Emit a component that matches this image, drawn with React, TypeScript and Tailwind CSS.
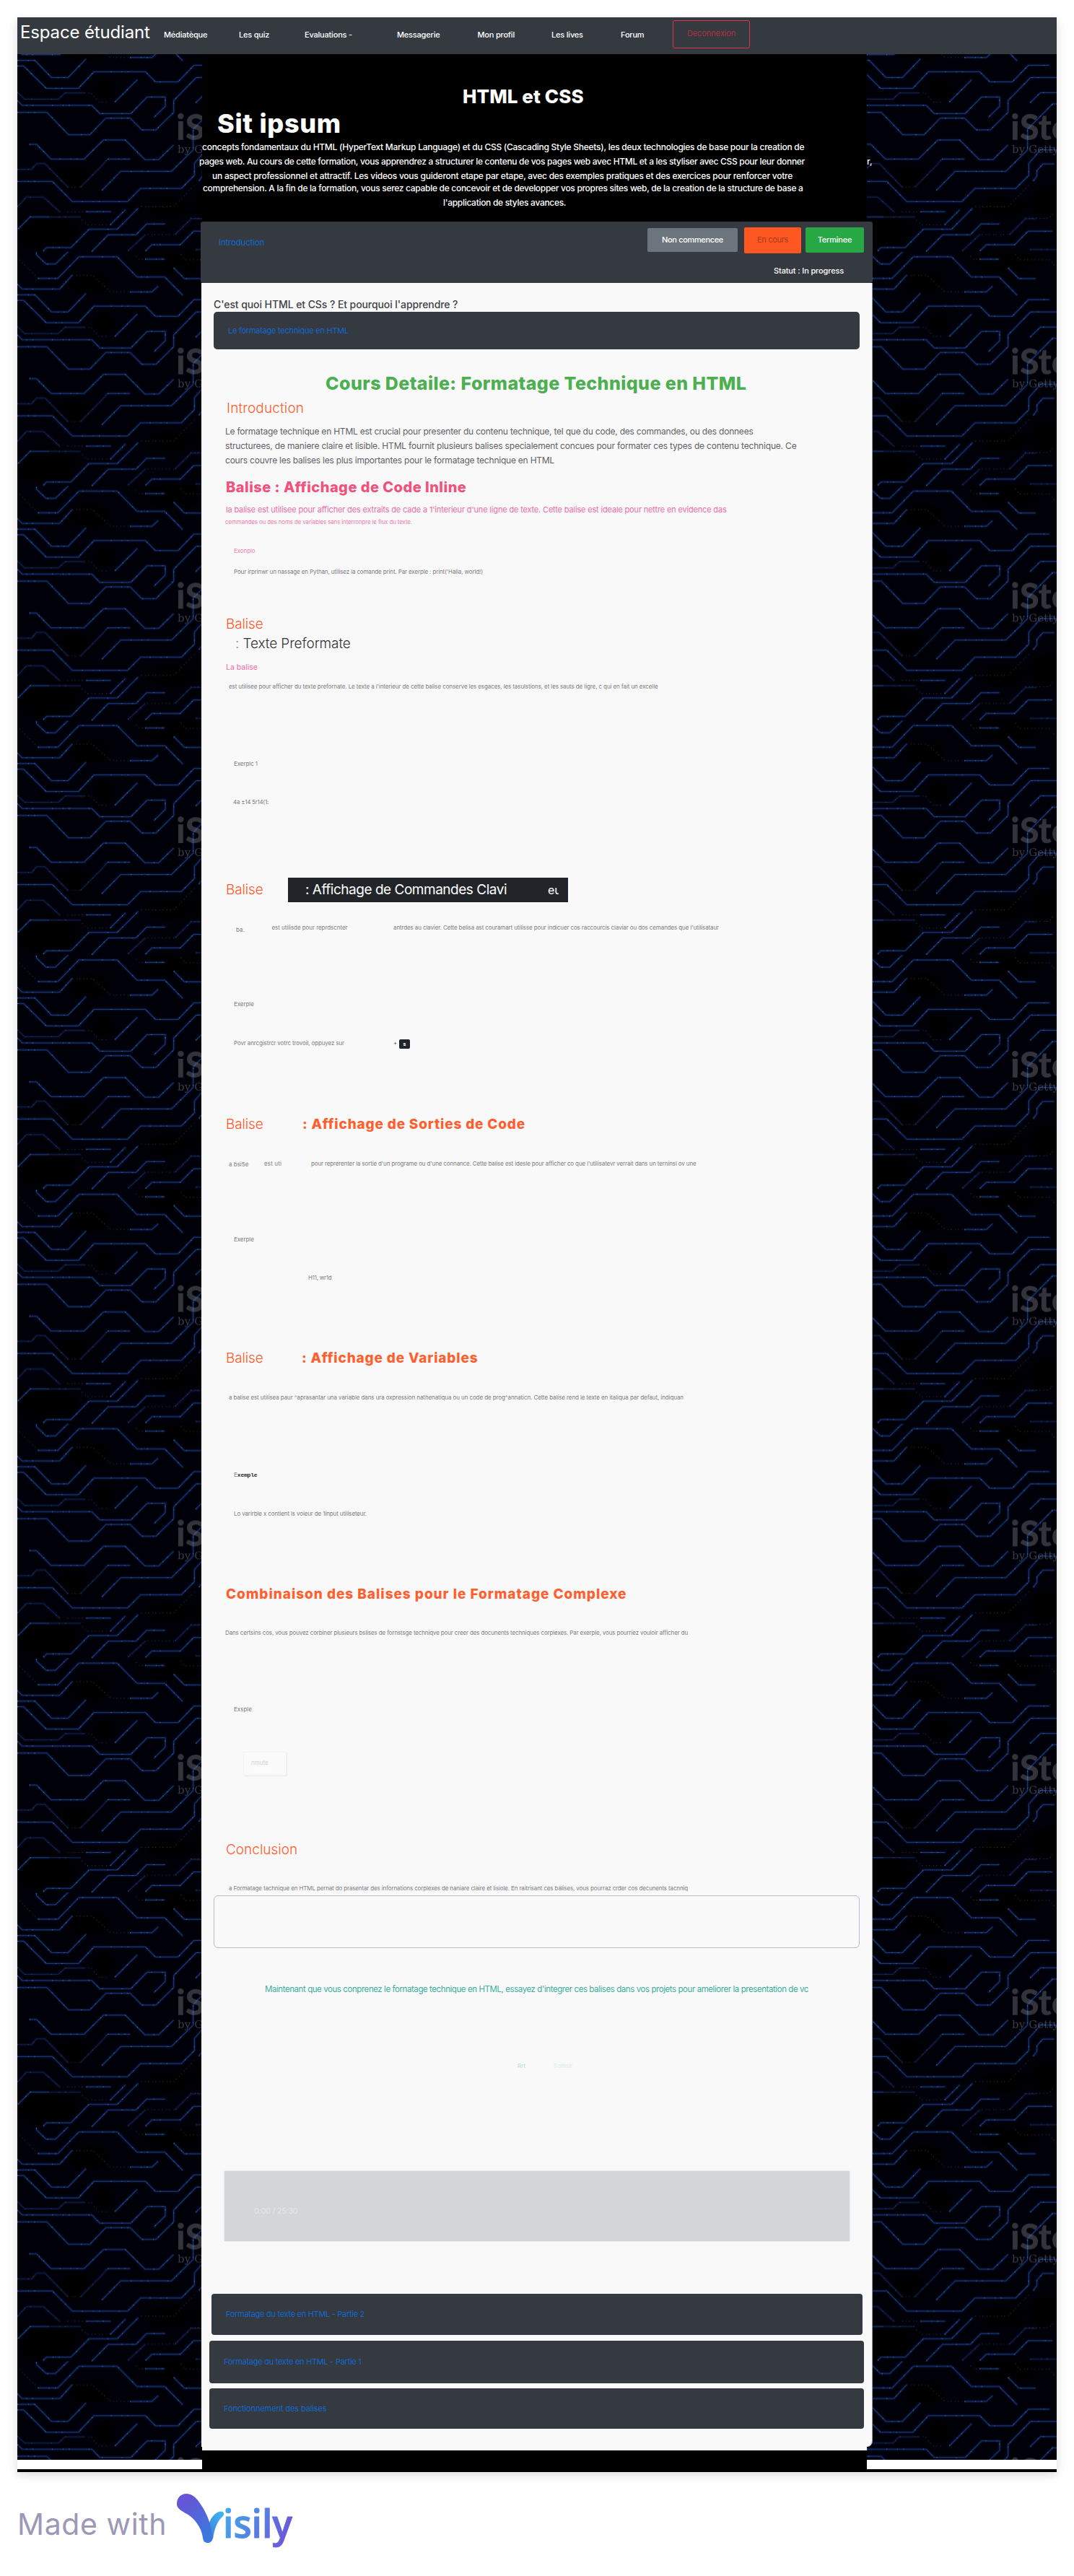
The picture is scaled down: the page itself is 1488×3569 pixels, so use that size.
import React from "react";

const SMALL = "text-[8px] leading-[20px] whitespace-nowrap text-[#7b7e81]";
const HEADING = "font-extrabold leading-[20px] whitespace-nowrap";
const ORANGE = "text-[19px] font-light leading-[20px] tracking-[-0.15px] whitespace-nowrap text-[#ff5a28]";
const LINK = "text-[11px] leading-[20px] whitespace-nowrap text-[#1268d0]";
const HERO = "text-[12px] font-medium leading-[20px] whitespace-nowrap";

const traces = [
  "72,71 145,71 214,142 283,142 358,65",
  "72,94 98,94 192,187 326,187 391,118 604,118 646,160 740,160 807,91 894,91",
  "72,238 93,258 382,258 415,292 544,292 612,223 687,223 687,262 640,308",
  "478,244 571,151",
  "72,287 195,287 285,380 373,380 440,311 541,311 590,360 648,360 722,287 722,238 816,142 940,142",
  "814,247 857,205 940,205",
  "122,420 152,420 212,481 350,481 430,402 521,402 602,483 660,483 722,422",
  "447,481 541,481",
  "424,611 502,532 713,532 803,443 803,357 907,252 940,252",
  "72,574 218,574 301,658 530,658 585,603 754,603 808,549 808,499 857,443 940,443",
  "827,572 842,552 842,529 867,501 914,501",
  "358,700 461,700",
  "458,755 522,691",
  "75,772 125,722 200,722",
  "180,863 194,849 295,849 370,773 487,773 575,685",
  "382,865 450,796 565,796 609,751 685,751",
  "605,863 632,837 750,837 805,781 907,781",
];

const faintTraces = [
  "72,203 102,232 243,232 270,206 350,206",
  "72,524 131,524 152,500 187,500 282,598",
  "335,598 424,508 447,481",
  "72,680 110,639 180,639 250,702",
  "200,722 335,722",
  "532,862 605,795",
  "728,795 795,729 840,729",
  "814,857 940,857",
];

const lowerTraces = [
  "151,870 152,880 192,918 230,918 285,865",
  "158,978 240,978 328,888 487,888 570,972 685,972 760,1048",
  "603,898 685,898",
  "722,934 767,979 837,979",
  "72,1002 92,1022 248,1022 300,965",
  "540,1034 632,1034 658,1010",
];

const dottedTraces = [
  "280,598 335,598",
  "350,206 378,206 410,244 450,244",
  "280,700 345,700",
  "340,735 365,755 450,755",
  "585,679 722,679 808,590",
  "612,795 728,795",
  "792,727 894,727 910,703",
];

const lowerDotted = [
  "80,900 158,978",
  "300,965 385,965 460,1034 540,1034",
  "565,885 578,898 603,898",
  "752,877 770,900 894,900 924,935",
];

function Traces({ items, faint }: { items: string[]; faint?: boolean }) {
  return (
    <g fill="none" strokeLinejoin="round" opacity={faint ? 0.55 : 0.95}>
      {items.map((p) => (
        <g key={p}>
          <polyline points={p} stroke="#03123c" strokeWidth="14" opacity="0.35" />
          <polyline points={p} stroke="#06205c" strokeWidth="7" opacity="0.45" />
          <polyline points={p} stroke="#1f3d78" strokeWidth="3" />
          <polyline points={p} stroke="#4d7cae" strokeWidth="3" strokeDasharray="4 41 3 22 4 78" />
        </g>
      ))}
    </g>
  );
}

function Dotted({ items }: { items: string[] }) {
  return (
    <g fill="none" stroke="#46566f" strokeWidth="3">
      {items.map((p) => (
        <polyline key={p} points={p} strokeDasharray="4 14 3 9" opacity="0.65" />
      ))}
    </g>
  );
}

function CircuitBackdrop() {
  return (
    <svg className="block h-[3333px] w-full" viewBox="0 0 1440 3333" preserveAspectRatio="none">
      <defs>
        <radialGradient id="shade">
          <stop offset="0.4" stopColor="#000" />
          <stop offset="1" stopColor="#000" stopOpacity="0" />
        </radialGradient>
        <pattern id="circuit" x="0" y="-51" width="578" height="324.75" patternUnits="userSpaceOnUse">
          <rect width="578" height="325" fill="#000009" />
          <g transform="translate(-24 36) scale(0.3333)">
            <g fill="url(#shade)">
              <ellipse cx="435" cy="190" rx="60" ry="60" />
              <ellipse cx="310" cy="560" rx="110" ry="70" />
              <ellipse cx="190" cy="780" rx="190" ry="110" />
              <ellipse cx="700" cy="680" rx="130" ry="60" />
              <ellipse cx="720" cy="-80" rx="190" ry="90" />
              <ellipse cx="370" cy="20" rx="120" ry="70" />
              <ellipse cx="890" cy="660" rx="120" ry="90" />
            </g>
            <Traces items={traces} />
            <Traces items={faintTraces} faint />
            <Dotted items={dottedTraces} />
            <g transform="translate(0 -975)">
              <Traces items={lowerTraces} />
              <Dotted items={lowerDotted} />
            </g>
          </g>
          <text x="220" y="170" fontFamily="Lato" fontWeight="900" fontSize="49" fill="#808088" fillOpacity="0.4">
            iStock
          </text>
          <text x="222" y="187.500" fontFamily="DejaVu Serif" fontSize="15" fill="#808088" fillOpacity="0.45" textLength="65">
            by Getty
          </text>
        </pattern>
      </defs>
      <rect width="578" height="3333" fill="url(#circuit)" />
      <rect x="1156" width="284" height="3333" fill="url(#circuit)" />
    </svg>
  );
}

function NavBar() {
  return (
    <nav className="flex h-[51px] bg-[#343a40] pl-1 text-[11px] font-medium text-white">
      <div className="mt-[11px] w-[199px] text-[24px] font-normal leading-[20px] tracking-[-0.15px] whitespace-nowrap">
        Espace étudiant
      </div>
      <div className="flex pt-[14px] leading-[20px] tracking-[-0.2px] whitespace-nowrap">
        <a className="w-[104px]">Médiatèque</a>
        <a className="w-[91px]">Les quiz</a>
        <a className="w-[128px]">Evaluations -</a>
        <a className="w-[111.5px]">Messagerie</a>
        <a className="w-[102.5px]">Mon profil</a>
        <a className="w-[96px]">Les lives</a>
        <a className="w-[72px]">Forum</a>
      </div>
      <button className="mt-1 h-[39px] w-[107px] rounded-[3px] border border-[#dc3545] pb-[3px] text-[11px] font-normal leading-[20px] tracking-[-0.1px] text-[#b52f40]">
        Deconnexion
      </button>
    </nav>
  );
}

function Hero() {
  return (
    <header className="ml-[2px] h-[232px] w-[921px] bg-black pt-[49px] text-white">
      <h1 className={HEADING + " pl-[361px] text-[26px] tracking-[0.07px]"}>HTML et CSS</h1>
      <h2 className={HEADING + " mt-[17px] pl-[21px] text-[36px] tracking-[0.7px]"}>Sit ipsum</h2>
      <p className={HERO + " mt-[13px] tracking-[-0.262px]"}>
        concepts fondamentaux du HTML (HyperText Markup Language) et du CSS (Cascading Style Sheets), les deux technologies de base pour la creation de
      </p>
      <div className="-ml-[4px] flex">
        <p className={HERO + " w-[925px] shrink-0 tracking-[-0.32px]"}>
          pages web. Au cours de cette formation, vous apprendrez a structurer le contenu de vos pages web avec HTML et a les styliser avec CSS pour leur donner
        </p>
        <span className={HERO}>r,</span>
      </div>
      <p className={HERO + " pl-[14px] tracking-[-0.24px]"}>
        un aspect professionnel et attractif. Les videos vous guideront etape par etape, avec des exemples pratiques et des exercices pour renforcer votre
      </p>
      <p className={HERO + " -mt-[3px] pl-px tracking-[-0.303px]"}>
        comprehension. A la fin de la formation, vous serez capable de concevoir et de developper vos propres sites web, de la creation de la structure de base a
      </p>
      <p className={HERO + " pl-[334px] tracking-[-0.3px]"}>l'application de styles avances.</p>
    </header>
  );
}

function StatusBar() {
  return (
    <div className="h-[85px] w-[931px] rounded-[3px] bg-[#343a40]">
      <div className="flex h-[50px] items-start text-[11px] font-medium leading-[20px] text-white">
        <a className="mt-[19px] w-[619px] pl-[25px] text-[11.5px] font-normal tracking-[-0.19px] text-[#1268d0]">Introduction</a>
        <button className="mt-[9px] h-[33px] w-[125px] rounded-[2px] bg-[#6c757d] pb-px tracking-[-0.34px]">Non commencee</button>
        <button className="ml-[9px] mt-[8px] h-[36px] w-[79px] rounded-[2px] bg-[#ff5722] pb-[2px] font-normal tracking-[-0.3px] text-[#a33d1f]">En cours</button>
        <button className="ml-[6px] mt-[8px] h-[35px] w-[81px] rounded-[2px] bg-[#28a745] pb-px tracking-[-0.22px]">Terminee</button>
      </div>
      <div className="mt-[8px] pl-[794px] text-[11px] font-medium leading-[20px] tracking-[-0.13px] whitespace-nowrap text-white">
        Statut : In progress
      </div>
    </div>
  );
}

function Article() {
  return (
    <main className="ml-[1px] h-[2998px] w-[930px] rounded-br-[8px] border-r border-[#9a9da1] bg-[#f9f9f9] pl-px">
      <h3 className="ml-[16px] pt-[20px] text-[14px] font-medium leading-[20px] tracking-[-0.08px] text-[#3f4245]">
        C'est quoi HTML et CSs ? Et pourquoi l'apprendre ?
      </h3>
      <div className="ml-[16px] h-[52px] w-[895px] rounded-[5px] bg-[#343a40] pl-[20px] pt-[16px]">
        <a className={LINK + " block tracking-[-0.243px]"}>Le formatage technique en HTML</a>
      </div>

      <h2 className={HEADING + " ml-[171px] mt-[37px] text-[25px] tracking-[0.42px] text-[#4caf50]"}>
        Cours Detaile: Formatage Technique en HTML
      </h2>
      <h3 className="ml-[34px] mt-[15px] text-[19px] font-light leading-[20px] tracking-[0.15px] text-[#ff5a28]">Introduction</h3>
      <div className="ml-[32px] mt-[12px] text-[12px] leading-[20px] whitespace-nowrap text-[#5f6265]">
        <p className="tracking-[-0.22px]">
          Le formatage technique en HTML est crucial pour presenter du contenu technique, tel que du code, des commandes, ou des donnees
        </p>
        <p className="tracking-[-0.187px]">
          structurees, de maniere claire et lisible. HTML fournit plusieurs balises specialement concues pour formater ces types de contenu technique. Ce
        </p>
        <p className="tracking-[-0.223px]">cours couvre les balises les plus importantes pour le formatage technique en HTML</p>
      </div>

      <h3 className={HEADING + " ml-[33px] mt-[17px] text-[20px] tracking-[0.47px] text-[#f1527c]"}>
        Balise : Affichage de Code Inline
      </h3>
      <p className="ml-[33px] mt-[11px] text-[11px] leading-[20px] tracking-[-0.17px] whitespace-nowrap text-[#ef6ca6]">
        la balise est utilisee pour afficher des extraits de cade a 1'interieur d'une ligne de texte. Cette balise est ideale pour nettre en evidence das
      </p>
      <p className="-mt-[3px] ml-[32px] text-[8px] leading-[20px] tracking-[-0.155px] whitespace-nowrap text-[#f07db0]">
        cemmandes ou des noms de variables sans interronpre le flux du texte.
      </p>
      <p className="ml-[44px] mt-[20px] text-[8px] leading-[20px] tracking-[-0.09px] text-[#f07db0]">Exonplo</p>
      <p className={SMALL + " ml-[44px] mt-[9px] tracking-[-0.135px]"}>
        Pour irprinwr un nassage en Pythan, utilisez la comande print. Par exerple : print('Halla, world!)
      </p>

      <h3 className={ORANGE + " ml-[33px] mt-[53px]"}>Balise</h3>
      <h3 className="ml-[46px] mt-[7px] text-[19px] font-light leading-[20px] tracking-[-0.1px] text-[#303336]">
        <span className="text-[#8b8e90]">:</span> Texte Preformate
      </h3>
      <p className="ml-[33px] mt-[13px] text-[10.5px] leading-[20px] text-[#ee6aa5]">La balise</p>
      <p className={SMALL + " ml-[37px] mt-[6px] tracking-[-0.103px]"}>
        est utilisee pour afficher du texte prefornate. Le texte a l'interieur de cette balise conserve les esgaces, les tasulstions, et les sauts de ligre, c qui en fait un excelle
      </p>
      <p className={SMALL + " ml-[44px] mt-[87px] tracking-[-0.08px]"}>Exerplc 1</p>
      <p className={SMALL + " ml-[43px] mt-[33px] tracking-[-0.26px]"}>4a ±14 5r14(1:</p>

      <div className="ml-[33px] mt-[95px] flex h-[34px]">
        <h3 className={ORANGE + " w-[86px] pt-[7px]"}>Balise</h3>
        <div className="flex w-[388px] bg-[#212529] pl-[24px] pt-[7px] text-[19px] leading-[20px] whitespace-nowrap text-white">
          <span className="w-[336px] tracking-[-0.48px]">: Affichage de Commandes Clavi</span>
          <span className="w-[15px] overflow-hidden text-[16px]">eu</span>
        </div>
      </div>
      <div className={SMALL + " ml-[47px] mt-[25px] flex h-[20px]"}>
        <span className="mt-[3px] w-[49.5px]">ba.</span>
        <span className="w-[168.5px] tracking-[-0.055px]">est utilisde pour reprdscnter</span>
        <span className="tracking-[-0.117px]">
          antrdes au clavier. Cette belisa ast couramart utilisse pour indicuer cos raccourcis claviar ou dos cemandes que l'utilisataur
        </span>
      </div>
      <p className={SMALL + " ml-[44px] mt-[86px] tracking-[-0.08px]"}>Exerple</p>
      <div className={SMALL + " ml-[44px] mt-[34px] flex h-[20px] tracking-[-0.129px]"}>
        <span className="w-[221px]">Povr anrcgistrcr votrc trovoil, oppuyez sur</span>
        <span className="w-[8px] text-[#3c3f42]">+</span>
        <kbd className="mt-[5px] h-[13px] w-[15px] rounded-[2px] bg-[#212529] text-center font-[Inter] text-[7px] font-bold leading-[13px] text-white">s</kbd>
      </div>

      <div className="ml-[33px] mt-[93px] flex h-[20px]">
        <h3 className={ORANGE + " w-[106px]"}>Balise</h3>
        <h3 className={HEADING + " text-[19px] tracking-[0.82px] text-[#ff5f2e]"}>: Affichage de Sorties de Code</h3>
      </div>
      <div className={SMALL + " ml-[37px] mt-[34px] flex h-[20px]"}>
        <span className="mt-px w-[49px]">a bsi5e</span>
        <span className="w-[65px] tracking-[0.13px]">est uti</span>
        <span className="tracking-[-0.134px]">
          pour reprerenter la sortie d'un programe ou d'une connance. Cette balise est idesle pour afficher co que l'utilisatevr verrait dans un terninsl ov une
        </span>
      </div>
      <p className={SMALL + " ml-[44px] mt-[85px] tracking-[-0.08px]"}>Exerple</p>
      <p className={SMALL + " ml-[147px] mt-[33px] tracking-[-0.247px]"}>H11, wr1d</p>

      <div className="ml-[33px] mt-[92px] flex h-[20px]">
        <h3 className={ORANGE + " w-[105px]"}>Balise</h3>
        <h3 className={HEADING + " text-[19px] tracking-[0.83px] text-[#ff5f2e]"}>: Affichage de Variables</h3>
      </div>
      <p className={SMALL + " ml-[37px] mt-[34px] tracking-[-0.092px]"}>
        a balise est utilisea paur ^aprasantar una variable dans ura oxpression nathenatiqua ou un code de prog^annaticn. Cette balise rend le texte en italiqua par defaut, indiquan
      </p>
      <p className={SMALL + " ml-[44px] mt-[87px]"}>
        E<span className="font-mono font-bold tracking-[-0.2px] text-[#26292c]">xemple</span>
      </p>
      <p className={SMALL + " ml-[44px] mt-[33px] tracking-[-0.13px]"}>Lo varirble x contient ls voieur de 1input utiliseteur.</p>

      <h3 className={HEADING + " ml-[33px] mt-[92px] text-[19px] tracking-[0.95px] text-[#ff5f2e]"}>
        Combinaison des Balises pour le Formatage Complexe
      </h3>
      <p className={SMALL + " ml-[32px] mt-[33px] tracking-[-0.144px]"}>
        Dans certsins cos, vous pouvez corbiner plusieurs bslises de fornstsge techniqve pour creer des docunents techniques corplexes. Par exerple, vous pourriez vouloir afficher du
      </p>
      <p className={SMALL + " ml-[44px] mt-[86px]"}>Exsple</p>
      <div className="ml-[57px] mt-[49px] h-[33px] w-[60px] rounded-[2px] border border-[#f3f3f3] bg-[#fafafa] pl-[10px] pt-[9px] text-[8px] leading-[11px] text-[#d3d4d5] shadow-[1px_1px_1px_rgba(0,0,0,0.06)]">
        <p>nmute</p>
        <p className="text-white">ntruder</p>
      </div>

      <h3 className="ml-[33px] mt-[93px] text-[19px] font-light leading-[20px] text-[#ff5a28]">Conclusion</h3>
      <p className={SMALL + " ml-[37px] mt-[33px] tracking-[-0.136px]"}>
        a Formatage tachnique en HTML pernat do prasentar des infornations corplexes de naniare claire et lisiole. En raitrisant ces balises, vous pourraz crder cos decunents tacnniq
      </p>
      <div className="ml-[16px] h-[73px] w-[895px] rounded-[6px] border border-[#b9bcc8]" />
      <p className="ml-[87px] mt-[47px] text-[11.5px] leading-[20px] tracking-[-0.427px] whitespace-nowrap text-[#3aaea0]">
        Maintenant que vous conprenez le fornatage technique en HTML, essayez d'integrer ces balises dans vos projets pour ameliorer la presentation de vc
      </p>
      <div className="ml-[437px] mt-[86px] flex h-[20px] text-[8px] leading-[20px]">
        <span className="w-[50px] font-medium text-[#c3e6c5]">Rrt</span>
        <span className="text-[#dceedd]">Somsir</span>
      </div>

      <div className="ml-[31px] mt-[136px] h-[97px] w-[866px] bg-[#d4d5d7] pl-[41px] pt-[45px] text-[11px] leading-[20px] tracking-[-0.33px] text-[#e4e5e6] shadow-[0_0_2px_rgba(0,0,0,0.15)]">
        0:00 / 25:30
      </div>

      <div className="ml-[13px] mt-[73px] h-[57px] w-[902px] rounded-[4px] bg-[#343a40] pl-[20px] pt-[18px]">
        <a className={LINK + " block tracking-[-0.29px]"}>Formatage du texte en HTML - Partie 2</a>
      </div>
      <div className="ml-[10px] mt-[8px] h-[59px] w-[907px] rounded-[4px] bg-[#343a40] pl-[20px] pt-[19px]">
        <a className={LINK + " block tracking-[-0.27px]"}>Formatage du texte en HTML - Partie 1</a>
      </div>
      <div className="ml-[10px] mt-[7px] h-[56px] w-[907px] rounded-[4px] bg-[#343a40] pl-[20px] pt-[18px]">
        <a className={LINK + " block tracking-[-0.11px]"}>Fonctionnement des balises</a>
      </div>
    </main>
  );
}

function VisilyLogo() {
  return (
    <svg className="h-[76px] w-[164px]" viewBox="0 0 164 76">
      <defs>
        <linearGradient id="leaf" x1="0" y1="0" x2="0.6" y2="1">
          <stop offset="0.2" stopColor="#6655d6" />
          <stop offset="1" stopColor="#3b78de" />
        </linearGradient>
        <linearGradient id="branch" x1="0.8" y1="0" x2="0.2" y2="1">
          <stop offset="0" stopColor="#3fb4f2" />
          <stop offset="1" stopColor="#3d84dd" />
        </linearGradient>
        <linearGradient id="word" x1="0" y1="0" x2="1" y2="0.4">
          <stop offset="0" stopColor="#41b3ee" />
          <stop offset="0.5" stopColor="#5089e6" />
          <stop offset="1" stopColor="#6a5ddb" />
        </linearGradient>
      </defs>
      <path d="M45 40 C48 32 54 25 61 24.5 C65 24.5 66.5 28 64 31 C56 38 52 48 50 63 L45 58 Z" fill="url(#branch)" />
      <path
        d="M0 14 C0 5 6 0 13 0 C20 0 25 4 29 9 C38 21 44 33 47 46 C48 52 50 58 49.5 62 C49 66 46 68 42.7 68 C39 68 36.5 66 36 61 C34 46 24 34 14 28 C5 23 0 20 0 14 Z"
        fill="url(#leaf)"
      />
      <text x="64" y="60.5" fontFamily="Open Sans" fontWeight="600" fontSize="54" textLength="96" lengthAdjust="spacingAndGlyphs" fill="url(#word)" stroke="url(#word)" strokeWidth="1" strokeLinejoin="round">
        isily
      </text>
    </svg>
  );
}

export default function App() {
  return (
    <div className="h-[3569px] w-[1488px] overflow-hidden bg-white pl-[24px] pt-[24px] font-[Inter,sans-serif]">
      <div className="relative h-[3401px] w-[1440px] shadow-[0_4px_12px_rgba(0,0,0,0.14)]">
        <div className="absolute inset-x-0 bottom-0 top-[51px] flex flex-col bg-white">
          <CircuitBackdrop />
          <div className="mt-auto h-[4px] bg-black" />
        </div>
        <div className="relative">
          <NavBar />
          <div className="ml-[254px]">
            <Hero />
            <StatusBar />
            <div className="relative">
              <div className="absolute bottom-0 left-[2px] h-[35px] w-[921px] translate-y-[35px] bg-black">
                <div className="h-[5px] bg-[#f9f9f9]" />
              </div>
              <Article />
            </div>
          </div>
        </div>
      </div>
      <footer className="mt-[30px] flex">
        <span className="mt-[22px] w-[221px] text-[41px] leading-[40px] tracking-[0.6px] whitespace-nowrap text-[#9c98b5]">Made with</span>
        <VisilyLogo />
      </footer>
    </div>
  );
}
